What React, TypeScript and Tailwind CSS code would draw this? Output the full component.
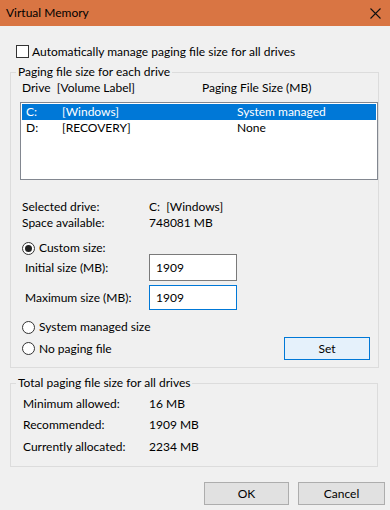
import React from "react";

function Radio({ checked = false }: { checked?: boolean }) {
  return (
    <span className="flex h-[13px] w-[13px] shrink-0 items-center justify-center rounded-full border border-[#333] bg-white">
      {checked && <span className="h-[7px] w-[7px] rounded-full bg-[#222]" />}
    </span>
  );
}

function GroupRow({ label, value }: { label: string; value: string }) {
  return (
    <div className="flex h-4 items-center pl-[12px] leading-4">
      <span className="w-[126px]">{label}</span>
      <span>{value}</span>
    </div>
  );
}

export default function App() {
  return (
    <div className="h-[510px] w-[390px] overflow-hidden bg-[#f0f0f0] font-['Lato',sans-serif] text-[12px] text-black">
      {/* title bar */}
      <div className="flex h-[26px] items-center justify-between bg-[#d97543] pl-[6px] pr-[9px]">
        <span className="text-[12px]">Virtual Memory</span>
        <svg width="11" height="11" viewBox="0 0 11 11" aria-hidden>
          <path d="M0.5 0.5 L10.5 10.5 M10.5 0.5 L0.5 10.5" stroke="#111" strokeWidth="1.1" />
        </svg>
      </div>

      <div className="px-[10px]">
        {/* auto manage */}
        <div className="mt-[19px] flex h-[13px] items-center gap-[3px] pl-[6px]">
          <span className="h-[13px] w-[13px] shrink-0 border border-[#333] bg-white" />
          <span className="leading-4">Automatically manage paging file size for all drives</span>
        </div>

        {/* per drive group */}
        <fieldset className="mt-[6px] h-[304px] w-[368px] border border-[#dcdcdc]">
          <legend className="ml-[5px] px-[2px] leading-4">Paging file size for each drive</legend>

          <div className="flex h-4 items-center pl-[11px] leading-4">
            <span className="w-[180px]">Drive&nbsp; [Volume Label]</span>
            <span>Paging File Size (MB)</span>
          </div>

          <div className="ml-[9px] mt-[6px] h-[78px] w-[358px] border border-[#828790] bg-white p-px">
            <div className="flex h-4 items-center bg-[#0078d7] leading-4 text-white">
              <span className="w-[40px] pl-[4px]">C:</span>
              <span className="w-[175px]">[Windows]</span>
              <span>System managed</span>
            </div>
            <div className="flex h-4 items-center leading-4">
              <span className="w-[40px] pl-[4px]">D:</span>
              <span className="w-[175px]">[RECOVERY]</span>
              <span>None</span>
            </div>
          </div>

          <div className="mt-[19px] flex h-4 items-center pl-[11px] leading-4">
            <span className="w-[127px]">Selected drive:</span>
            <span>C:&nbsp; [Windows]</span>
          </div>
          <div className="flex h-4 items-center pl-[11px] leading-4">
            <span className="w-[127px]">Space available:</span>
            <span>748081 MB</span>
          </div>

          <div className="mt-[9px] flex h-4 items-center gap-[4px] pl-[11px] leading-4">
            <Radio checked />
            <span>Custom size:</span>
          </div>

          <div className="mt-[-2px] flex h-[27px] items-center pl-[14px]">
            <span className="w-[124px]">Initial size (MB):</span>
            <div className="flex h-[27px] w-[88px] items-center border border-[#7a7a7a] bg-white pl-[6px]">1909</div>
          </div>
          <div className="mt-[4px] flex h-[25px] items-center pl-[14px]">
            <span className="w-[124px]">Maximum size (MB):</span>
            <div className="flex h-[25px] w-[88px] items-center border border-[#0078d7] bg-white pl-[6px]">1909</div>
          </div>

          <div className="mt-[9px] flex h-4 items-center gap-[4px] pl-[11px] leading-4">
            <Radio />
            <span>System managed size</span>
          </div>
          <div className="mt-[2px] flex h-[23px] items-center pl-[11px] pr-[8px]">
            <div className="flex items-center gap-[4px] leading-4">
              <Radio />
              <span>No paging file</span>
            </div>
            <button className="ml-auto h-[23px] w-[86px] border border-[#0078d7] bg-[#e5f1fb]">Set</button>
          </div>
        </fieldset>

        {/* totals group */}
        <fieldset className="mt-[7px] h-[92px] w-[368px] border border-[#dcdcdc]">
          <legend className="ml-[5px] px-[2px] leading-4">Total paging file size for all drives</legend>
          <div className="mt-[5px]">
            <GroupRow label="Minimum allowed:" value="16 MB" />
          </div>
          <div className="mt-[5px]">
            <GroupRow label="Recommended:" value="1909 MB" />
          </div>
          <div className="mt-[6px]">
            <GroupRow label="Currently allocated:" value="2234 MB" />
          </div>
        </fieldset>

        <div className="mt-[15px] flex justify-end gap-[9px] pr-[-5px]">
          <button className="h-[23px] w-[85px] border border-[#adadad] bg-[#e1e1e1]">OK</button>
          <button className="-mr-[5px] h-[23px] w-[87px] border border-[#adadad] bg-[#e1e1e1]">Cancel</button>
        </div>
      </div>
    </div>
  );
}
